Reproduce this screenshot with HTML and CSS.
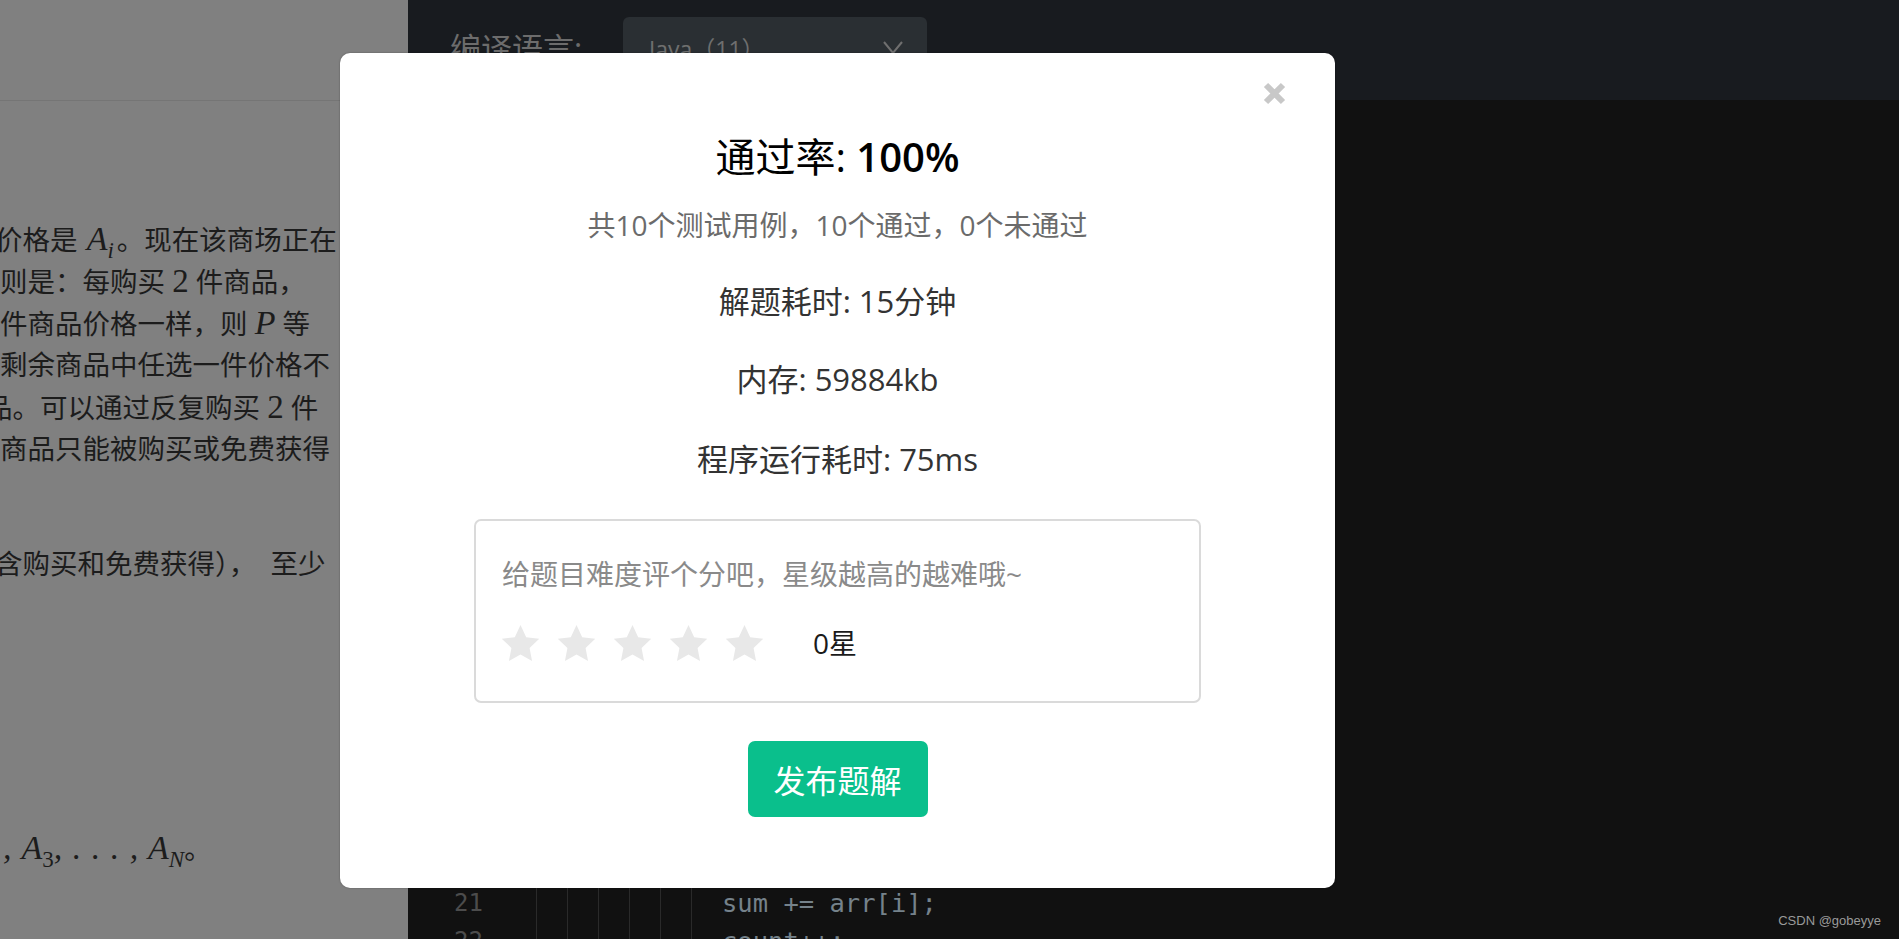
FILE: index.html
```html
<!DOCTYPE html>
<html lang="zh-CN">
<head>
    <meta charset="UTF-8">
    <title>提交结果</title>
    <link rel="stylesheet" href="styles.css">
</head>
<body>
    <div class="page">
        <!-- 题目描述 -->
        <section class="problem">
            <div class="problem-head"></div>
            <div class="problem-body">
                <p class="para">
                    <span class="line cut-sm">价格是 <i class="math math-sub">A<sub>i</sub></i>。现在该商场正在</span>
                    <span class="line">则是：每购买 <span class="num">2</span> 件商品，</span>
                    <span class="line">件商品价格一样，则 <i class="math">P</i> 等</span>
                    <span class="line">剩余商品中任选一件价格不</span>
                    <span class="line cut-lg">品。可以通过反复购买 <span class="num">2</span> 件</span>
                    <span class="line">商品只能被购买或免费获得</span>
                </p>
                <p class="para para-answer">
                    <span class="line cut-sm">含购买和免费获得），&nbsp; 至少</span>
                </p>
                <p class="para para-input">
                    <span class="line"><i class="math math-list">, A<sub class="up">3</sub>, . . . , A<sub>N</sub></i>。</span>
                </p>
            </div>
        </section>

        <!-- 代码编辑器 -->
        <section class="editor">
            <div class="editor-head">
                <span class="lang-label">编译语言:</span>
                <div class="lang-select">
                    <span>Java（11）</span>
                    <svg width="20" height="14" viewBox="0 0 20 14"><path d="M1 1l9 11 9-11" fill="none" stroke="#6f6f6f" stroke-width="2"/></svg>
                </div>
            </div>
            <div class="editor-body">
                <div class="code-line"><span class="ln">1</span><span class="code">import java.util.*;</span></div>
                <div class="code-line"><span class="ln">2</span><span class="code"></span></div>
                <div class="code-line"><span class="ln">3</span><span class="code">public class Main {</span></div>
                <div class="code-line"><span class="ln">4</span><span class="code lv1">public static void main(String[] a) {</span></div>
                <div class="code-line"><span class="ln">5</span><span class="code lv2">Scanner sc = new Scanner(System.in);</span></div>
                <div class="code-line"><span class="ln">6</span><span class="code lv2">int n = sc.nextInt();</span></div>
                <div class="code-line"><span class="ln">7</span><span class="code lv2">int[] arr = new int[n];</span></div>
                <div class="code-line"><span class="ln">8</span><span class="code lv2">for (int i = 0; i &lt; n; i++) {</span></div>
                <div class="code-line"><span class="ln">9</span><span class="code lv3">arr[i] = sc.nextInt();</span></div>
                <div class="code-line"><span class="ln">10</span><span class="code lv2">}</span></div>
                <div class="code-line"><span class="ln">11</span><span class="code lv2">Arrays.sort(arr);</span></div>
                <div class="code-line"><span class="ln">12</span><span class="code lv2">long sum = 0;</span></div>
                <div class="code-line"><span class="ln">13</span><span class="code lv2">int count = 0;</span></div>
                <div class="code-line"><span class="ln">14</span><span class="code lv2">if (n &gt; 0) {</span></div>
                <div class="code-line"><span class="ln">15</span><span class="code lv3">for (int i = n - 1; i &gt;= 0; i--) {</span></div>
                <div class="code-line"><span class="ln">16</span><span class="code lv4">if (count == 2) {</span></div>
                <div class="code-line"><span class="ln">17</span><span class="code lv5">count = 0;</span></div>
                <div class="code-line"><span class="ln">18</span><span class="code lv5">continue;</span></div>
                <div class="code-line"><span class="ln">19</span><span class="code lv4">}</span></div>
                <div class="code-line"><span class="ln">20</span><span class="code lv4">{</span></div>
                <div class="code-line"><span class="ln">21</span><span class="code lv6">sum += arr[i];</span></div>
                <div class="code-line"><span class="ln">22</span><span class="code lv6">count++;</span></div>
            </div>
        </section>
    </div>

    <!-- 提交结果弹窗 -->
    <div class="modal">
        <button class="modal-close">
            <svg width="23" height="23" viewBox="0 0 23 23"><path d="M3 3l17 17M20 3L3 20" stroke="#c8c8c8" stroke-width="6"/></svg>
        </button>
        <h2 class="pass-rate">通过率: <b>100%</b></h2>
        <p class="case-summary">共10个测试用例，10个通过，0个未通过</p>
        <p class="stat">解题耗时: 15分钟</p>
        <p class="stat">内存: 59884kb</p>
        <p class="stat">程序运行耗时: 75ms</p>

        <div class="rate-box">
            <p class="rate-tip">给题目难度评个分吧，星级越高的越难哦~</p>
            <div class="rate-row">
                <div class="stars">
                    <svg class="star" viewBox="1.6 1.5 20.8 20.1"><path d="M12 1.5l3.2 6.8 7.3.9-5.4 5.1 1.4 7.3L12 18l-6.5 3.6 1.4-7.3-5.4-5.1 7.3-.9z"/></svg>
                    <svg class="star" viewBox="1.6 1.5 20.8 20.1"><path d="M12 1.5l3.2 6.8 7.3.9-5.4 5.1 1.4 7.3L12 18l-6.5 3.6 1.4-7.3-5.4-5.1 7.3-.9z"/></svg>
                    <svg class="star" viewBox="1.6 1.5 20.8 20.1"><path d="M12 1.5l3.2 6.8 7.3.9-5.4 5.1 1.4 7.3L12 18l-6.5 3.6 1.4-7.3-5.4-5.1 7.3-.9z"/></svg>
                    <svg class="star" viewBox="1.6 1.5 20.8 20.1"><path d="M12 1.5l3.2 6.8 7.3.9-5.4 5.1 1.4 7.3L12 18l-6.5 3.6 1.4-7.3-5.4-5.1 7.3-.9z"/></svg>
                    <svg class="star" viewBox="1.6 1.5 20.8 20.1"><path d="M12 1.5l3.2 6.8 7.3.9-5.4 5.1 1.4 7.3L12 18l-6.5 3.6 1.4-7.3-5.4-5.1 7.3-.9z"/></svg>
                </div>
                <span class="rate-value">0星</span>
            </div>
        </div>

        <button class="btn-publish">发布题解</button>
    </div>

    <div class="watermark">CSDN @gobeyye</div>
</body>
</html>
```

FILE: styles.css
```css
* {
    margin: 0;
    padding: 0;
    box-sizing: border-box;
}

body {
    font-family: "Open Sans", "Noto Sans CJK SC", sans-serif;
    width: 100vw;
    height: 100vh;
    overflow: hidden;
    background: #111111;
}

.page {
    display: grid;
    grid-template-columns: 408px 1fr;
    height: 100%;
}

/* 题目描述 (已被遮罩压暗) */
.problem {
    background: #808080;
    overflow: hidden;
}

.problem-head {
    height: 101px;
    border-bottom: 1px solid #757575;
}

.problem-body {
    padding-top: 117px;
    color: #1c1c1c;
    font-size: 27.5px;
}

.para .line {
    display: block;
    height: 42px;
    line-height: 42px;
    white-space: nowrap;
}

.cut-sm {
    margin-left: -5px;
}

.cut-lg {
    margin-left: -15px;
}

.para-answer {
    margin-top: 73px;
}

.para-input {
    margin-top: 242px;
    padding-left: 3px;
}

.math {
    font-family: "Liberation Serif", serif;
    font-size: 34px;
}

.math sub {
    font-size: 23px;
    line-height: 0;
}

.math sub.up {
    font-style: normal;
}

.math-sub {
    margin: 0 3px 0 2px;
}

.math-list {
    word-spacing: 2px;
}

.num {
    font-family: "Liberation Serif", serif;
    font-size: 33px;
}

/* 代码编辑器 */
.editor {
    background: #111111;
    overflow: hidden;
}

.editor-head {
    height: 100px;
    background: #181b1f;
    display: flex;
    align-items: flex-start;
    padding-left: 42px;
    color: #6c6c6c;
}

.lang-label {
    width: 173px;
    margin-top: 28px;
    font-size: 31px;
    line-height: 40px;
}

.lang-select {
    width: 304px;
    height: 66px;
    margin-top: 17px;
    background: #2a2f33;
    border-radius: 6px;
    display: flex;
    align-items: center;
    justify-content: space-between;
    padding: 0 24px 4px 26px;
    color: #6f6f6f;
    font-size: 23px;
}

.editor-body {
    padding-top: 24px;
    font-family: "DejaVu Sans Mono", "Liberation Mono", monospace;
    font-size: 25.5px;
}

.code-line {
    display: flex;
    height: 38px;
    line-height: 38px;
}

.ln {
    width: 92px;
    padding-right: 17px;
    text-align: right;
    color: #4c4c4c;
    font-size: 24px;
}

.code {
    margin-left: 36px;
    color: #75828b;
    white-space: pre;
    background-image: repeating-linear-gradient(90deg, #2a2a2a 0 1px, transparent 1px 31px);
    background-repeat: no-repeat;
    background-size: 0 100%;
}

.lv1 { padding-left: 31px; background-size: 31px 100%; }
.lv2 { padding-left: 62px; background-size: 62px 100%; }
.lv3 { padding-left: 93px; background-size: 93px 100%; }
.lv4 { padding-left: 124px; background-size: 124px 100%; }
.lv5 { padding-left: 155px; background-size: 155px 100%; }
.lv6 { padding-left: 186px; background-size: 186px 100%; }

/* 弹窗 */
.modal {
    position: absolute;
    left: 340px;
    top: 53px;
    width: 995px;
    height: 835px;
    background: #fff;
    border-radius: 10px;
    box-shadow: 0 0 2px rgba(0,0,0,0.35);
    display: flex;
    flex-direction: column;
    align-items: center;
    padding-top: 80px;
}

.modal-close {
    position: absolute;
    top: 29px;
    right: 49px;
    border: none;
    background: none;
    width: 23px;
    height: 23px;
    cursor: pointer;
}

.modal-close svg {
    display: block;
}

.pass-rate {
    font-size: 40px;
    line-height: 48px;
    font-weight: normal;
    color: #000;
}

.pass-rate b {
    font-weight: 600;
}

.case-summary {
    margin-top: 26px;
    font-size: 28px;
    line-height: 36px;
    color: #6b6b6b;
}

.stat {
    margin-top: 38px;
    font-size: 31px;
    line-height: 40px;
    color: #333;
}

.stat:nth-of-type(4) {
    margin-top: 40px;
}

.rate-box {
    margin-top: 40px;
    width: 727px;
    height: 184px;
    border: 2px solid #dadada;
    border-radius: 7px;
    padding: 35px 26px 0;
}

.rate-tip {
    font-size: 28px;
    line-height: 36px;
    color: #8a8a8a;
}

.rate-row {
    display: flex;
    align-items: center;
    margin-top: 33px;
}

.stars {
    display: flex;
    gap: 19px;
}

.star {
    width: 37px;
    height: 36px;
    fill: #e8e8e8;
}

.rate-value {
    margin-left: 50px;
    font-size: 28px;
    line-height: 36px;
    color: #1a1a1a;
}

.btn-publish {
    margin-top: 38px;
    width: 180px;
    height: 76px;
    border: none;
    border-radius: 7px;
    background: #0abf8c;
    color: #fff;
    font-family: inherit;
    font-size: 32px;
    cursor: pointer;
}

.watermark {
    position: absolute;
    right: 18px;
    bottom: 11px;
    font-family: "Liberation Sans", sans-serif;
    font-size: 13px;
    color: #9a9a9a;
}
```
